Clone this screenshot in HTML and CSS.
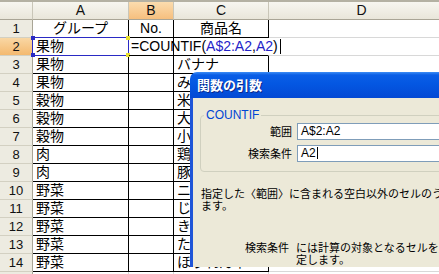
FILE: index.html
```html
<!DOCTYPE html>
<html lang="ja">
<head>
  <meta charset="UTF-8" />
  <title>関数の引数</title>
  <link rel="stylesheet" href="styles.css">
</head>
<body>
  <div class="screen">

    <!-- ワークシート -->
    <div class="sheet">
      <div class="row head">
        <div class="corner"></div>
        <div class="colhead">A</div>
        <div class="colhead sel">B</div>
        <div class="colhead">C</div>
        <div class="colhead">D</div>
      </div>

      <div class="row">
        <div class="rowhead">1</div>
        <div class="cell box center">グループ</div>
        <div class="cell box center">No.</div>
        <div class="cell box center">商品名</div>
        <div class="cell"></div>
      </div>

      <div class="row">
        <div class="rowhead sel">2</div>
        <div class="cell box ref">果物
          <span class="frame-ref"></span>
          <span class="handle tl"></span><span class="handle bl"></span>
          <span class="handle tr"></span><span class="handle br"></span>
        </div>
        <div class="cell box edit">=COUNTIF(<span class="refs">A$2:A2</span>,<span class="refs">A2</span>)<span class="caret"></span></div>
        <div class="cell box open"></div>
        <div class="cell"></div>
      </div>

      <div class="row"><div class="rowhead">3</div><div class="cell box">果物</div><div class="cell box"></div><div class="cell box">バナナ</div><div class="cell"></div></div>
      <div class="row"><div class="rowhead">4</div><div class="cell box">果物</div><div class="cell box"></div><div class="cell box">みかん</div><div class="cell"></div></div>
      <div class="row"><div class="rowhead">5</div><div class="cell box">穀物</div><div class="cell box"></div><div class="cell box">米</div><div class="cell"></div></div>
      <div class="row"><div class="rowhead">6</div><div class="cell box">穀物</div><div class="cell box"></div><div class="cell box">大豆</div><div class="cell"></div></div>
      <div class="row"><div class="rowhead">7</div><div class="cell box">穀物</div><div class="cell box"></div><div class="cell box">小麦</div><div class="cell"></div></div>
      <div class="row"><div class="rowhead">8</div><div class="cell box">肉</div><div class="cell box"></div><div class="cell box">鶏肉</div><div class="cell"></div></div>
      <div class="row"><div class="rowhead">9</div><div class="cell box">肉</div><div class="cell box"></div><div class="cell box">豚肉</div><div class="cell"></div></div>
      <div class="row"><div class="rowhead">10</div><div class="cell box">野菜</div><div class="cell box"></div><div class="cell box">ニンジン</div><div class="cell"></div></div>
      <div class="row"><div class="rowhead">11</div><div class="cell box">野菜</div><div class="cell box"></div><div class="cell box">じゃがいも</div><div class="cell"></div></div>
      <div class="row"><div class="rowhead">12</div><div class="cell box">野菜</div><div class="cell box"></div><div class="cell box">きゅうり</div><div class="cell"></div></div>
      <div class="row"><div class="rowhead">13</div><div class="cell box">野菜</div><div class="cell box"></div><div class="cell box">たまねぎ</div><div class="cell"></div></div>
      <div class="row"><div class="rowhead">14</div><div class="cell box">野菜</div><div class="cell box"></div><div class="cell box">ほうれん草</div><div class="cell"></div></div>
      <div class="row"><div class="rowhead"></div><div class="cell"></div><div class="cell"></div><div class="cell"></div><div class="cell"></div></div>
    </div>

    <!-- 関数の引数ダイアログ -->
    <div class="dialog">
      <div class="title">関数の引数</div>
      <div class="body">
        <fieldset class="group">
          <legend>COUNTIF</legend>
          <div class="args">
            <div class="arg-label">範囲</div>
            <div class="input">A$2:A2</div>
            <div class="arg-label">検索条件</div>
            <div class="input">A2<span class="caret small"></span></div>
          </div>
        </fieldset>

        <div class="desc">
          <div class="line">指定した〈範囲〉に含まれる空白以外のセルのうち、〈検索条件〉に一致するセルの個数を返し</div>
          <div class="line">ます。</div>
        </div>

        <div class="help">
          <div class="help-label">検索条件</div>
          <div class="help-text">
            <div class="line">には計算の対象となるセルを定義する条件を、数値、式、または文字列で指</div>
            <div class="line">定します。</div>
          </div>
        </div>
      </div>
    </div>

  </div>
</body>
</html>
```

FILE: styles.css
```css
html, body {
  margin: 0;
  padding: 0;
  background: #fff;
}
body {
  width: 439px;
  height: 274px;
  overflow: hidden;
  font-family: "Liberation Sans", "Noto Sans CJK JP", sans-serif;
}
.screen {
  position: relative;
  width: 439px;
  height: 274px;
  overflow: hidden;
}

/* sheet */
.sheet {
  width: 455px;
}
.row {
  display: grid;
  grid-template-columns: 33px 96px 45px 95px 186px;
  height: 18px;
}
.row.head {
  height: 20px;
  border-top: 2px solid #b4b1a3;
  box-sizing: border-box;
}
.corner,
.colhead {
  background: linear-gradient(#f7f6f0, #e9e6da);
  border-right: 1px solid #c9c6b8;
  border-bottom: 1px solid #a9a596;
  box-sizing: border-box;
  font-size: 14px;
  line-height: 17px;
  text-align: center;
  color: #111;
}
.colhead.sel {
  background: linear-gradient(#fbdcae, #f6bf7e);
}
.rowhead {
  background: #edebe1;
  border-right: 1px solid #a9a596;
  border-bottom: 1px solid #d3d0c2;
  box-sizing: border-box;
  font-size: 13px;
  line-height: 17px;
  text-align: center;
  color: #111;
}
.rowhead.sel {
  background: linear-gradient(#f9d7a4, #f4b96f);
}
.cell {
  position: relative;
  border-right: 1px solid #d8d8d8;
  border-bottom: 1px solid #d8d8d8;
  box-sizing: border-box;
  font-size: 14px;
  line-height: 17px;
  padding-left: 3px;
  white-space: nowrap;
  overflow: hidden;
  color: #000;
}
.cell.box {
  border-right-color: #000;
  border-bottom-color: #000;
}
.cell.center {
  text-align: center;
  padding-left: 0;
}
.cell.open {
  border-right-color: transparent;
}
.cell.edit {
  overflow: visible;
  padding-left: 2px;
  z-index: 2;
}
.refs {
  color: #2323c8;
}
.caret {
  display: inline-block;
  width: 1px;
  height: 15px;
  margin-left: 2px;
  background: #000;
  vertical-align: -3px;
}
.caret.small {
  height: 12px;
  margin-left: 1px;
  vertical-align: -2px;
}
.cell.ref {
  overflow: visible;
  z-index: 1;
}
.frame-ref {
  position: absolute;
  top: -1px;
  left: -1px;
  right: -1px;
  bottom: -1px;
  border: 1px solid #2a2ac4;
}
.handle {
  position: absolute;
  width: 4px;
  height: 4px;
  background: #2a2ac4;
}
.handle.tl { top: -2px; left: -2px; }
.handle.bl { bottom: -2px; left: -2px; }
.handle.tr { top: -2px; right: -2px; background: #e8e030; }
.handle.br { bottom: -2px; right: -2px; background: #e8e030; }

/* dialog */
.dialog {
  position: absolute;
  left: 190px;
  top: 72px;
  width: 300px;
  height: 195px;
  display: flex;
  flex-direction: column;
  z-index: 5;
}
.title {
  height: 26px;
  border-top-left-radius: 7px;
  background: linear-gradient(#3d8df5 0, #0a5ee6 3px, #0457e2 45%, #0349d4 100%);
  color: #fff;
  font-family: "Noto Sans CJK JP", sans-serif;
  font-weight: bold;
  font-size: 13px;
  line-height: 26px;
  padding-left: 7px;
  text-shadow: 1px 1px #0b2a8c;
}
.body {
  flex: 1;
  background: #ece9d8;
  border-left: 3px solid #1f55d8;
  padding: 11px 0 0 7px;
  font-family: "Noto Sans CJK JP", sans-serif;
  font-size: 11px;
  line-height: 12px;
  color: #000;
}
.group {
  margin: 0;
  padding: 2px 0 9px 0;
  border: 1px solid #d0d0bf;
  border-radius: 4px;
  min-width: 0;
}
.group legend {
  margin-left: 3px;
  padding: 0 2px;
  color: #0046d5;
  font-family: "Liberation Sans", sans-serif;
  font-size: 12px;
  line-height: 12px;
}
.args {
  display: grid;
  grid-template-columns: 91px 1fr;
  column-gap: 5px;
  row-gap: 5px;
}
.arg-label {
  text-align: right;
  line-height: 17px;
}
.input {
  height: 17px;
  box-sizing: border-box;
  background: #fff;
  border: 1px solid #7f9db9;
  padding-left: 3px;
  font-family: "Liberation Sans", sans-serif;
  font-size: 12px;
  line-height: 15px;
}
.desc {
  margin-top: 15px;
  padding-left: 1px;
}
.line {
  white-space: nowrap;
}
.help {
  margin-top: 30px;
  display: grid;
  grid-template-columns: 89px 1fr;
  column-gap: 7px;
}
.help-label {
  text-align: right;
}
.help-text {
  overflow: hidden;
}
```
